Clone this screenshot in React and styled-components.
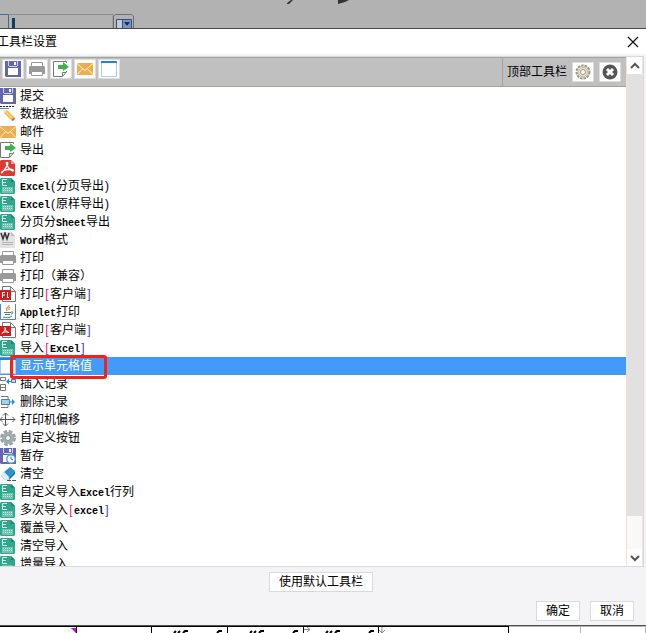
import React from 'react';
import styled, { createGlobalStyle } from 'styled-components';


const GlobalStyle = createGlobalStyle`
  * {
    box-sizing: border-box;
  }

  body {
    margin: 0;
    overflow: hidden;
    color: #000;
    font: 12px/18px "Liberation Sans", "Noto Sans CJK SC", sans-serif;
  }

  button {
    font: inherit;
    color: inherit;
  }
`;

const Page = styled.div`
  height: 100vh;
  display: flex;
  flex-direction: column;
  background: #b2b2b2;
`;

const Backdrop = styled.div`
  flex: 0 0 28px;
  display: flex;
  align-items: flex-end;
  overflow: hidden;
`;

const Dialog = styled.section`
  flex: 1;
  min-height: 0;
  display: flex;
  flex-direction: column;
  border-top: 1px solid #484848;
  border-bottom: 1px solid #505050;
  background: #f4f4f7;
`;

const TitleBar = styled.header`
  flex: 0 0 25px;
  display: flex;
  align-items: center;
  justify-content: space-between;
  padding-right: 7px;
  background: #fff;
  overflow: hidden;

  & h1 {
    margin: 0 0 0 -3px;
    font-size: 12px;
    font-weight: 400;
  }
`;

const CloseButton = styled.button`
  display: flex;
  padding: 0;
  border: 0;
  background: none;
`;

const Body = styled.div`
  flex: 1;
  min-height: 0;
  display: flex;
  margin: 2px 2px 0 0;
  border: solid #d9d9dd;
  border-width: 1px 1px 1px 0;
  background: #fff;
`;

const Main = styled.div`
  flex: 1;
  min-width: 0;
  display: flex;
  flex-direction: column;
`;

const Toolbar = styled.div`
  flex: 0 0 30px;
  display: flex;
  background: #c0c0c0;
  border: solid #a3a396;
  border-width: 1px 0;
`;

const ToolWell = styled.div`
  flex: 1;
  display: flex;
  align-items: flex-start;
  gap: 2px;
  padding: 1px 2px;
  border-right: 1px solid #a3a396;
`;

const ToolActions = styled.div`
  display: flex;
  align-items: center;
  gap: 5px;
  padding: 0 5px 0 4px;
`;

const ToolButton = styled.button`
  width: 22px;
  height: 20px;
  display: flex;
  align-items: center;
  justify-content: center;
  padding: 0;
  border: 1px solid #dcdcdc;
  background: #fff;
`;

const List = styled.ul`
  flex: 1;
  min-height: 0;
  margin: 0;
  padding: 0;
  list-style: none;
  overflow: hidden;
`;

const Row = styled.li`
  position: relative;
  height: 18px;
  display: flex;
  align-items: center;
  gap: 4px;
  color: ${p => p.$selected ? '#fff' : '#000'};
  background: ${p => p.$selected ? '#429bfa' : 'transparent'};
  white-space: nowrap;
`;

const Marker = styled.span`
  position: absolute;
  left: 10px;
  top: -2px;
  z-index: 1;
  width: 97px;
  height: 24px;
  border: 3px solid #fb1e12;
  border-radius: 3px;
`;

const Latin = styled.span`
  font: 10px/1 "Liberation Mono", monospace;
  font-weight: 700;
`;

const Bracket = styled.span`
  display: inline-block;
  width: 6px;
  line-height: 12px;
  text-align: center;
  color: ${p => p.$tint || 'inherit'};
`;

const ScrollBar = styled.div`
  flex: 0 0 17px;
  display: flex;
  flex-direction: column;
  border: solid #ebe4d6;
  border-width: 0 1px;
  background: #f9f9f7;
`;

const ScrollButton = styled.button`
  flex: 0 0 17px;
  display: flex;
  align-items: center;
  justify-content: center;
  padding: 0;
  border: 0;
  background: #fff;
`;

const Track = styled.div`
  flex: 1;
`;

const Thumb = styled.div`
  height: 93%;
  background: #e1e1e1;
`;

const Footer = styled.footer`
  display: flex;
  flex-direction: column;
  gap: 9px;
  padding: 5px 12px 4px 8px;
`;

const FooterRow = styled.div`
  display: flex;
  justify-content: ${p => p.$align};
  gap: 10px;
`;

const FooterButton = styled.button`
  height: 20px;
  padding: 0 9px;
  border: 1px solid #d9d9dc;
  background: #fff;
  line-height: 18px;
`;

const Sheet = styled.div`
  flex: 0 0 7px;
  display: grid;
  grid-template-columns: 77px 75px 76px 76px 75px 130px 72px 1fr;
  background: #fff;
  overflow: hidden;
`;

const Cell = styled.div`
  display: flex;
  justify-content: ${p => p.$end ? 'flex-end' : 'flex-start'};
  border: solid ${p => p.$faint ? '#b4b4b4' : '#000'};
  border-width: 1px 1px 0 0;
  overflow: hidden;
`;

const Drawing = styled.svg`
  flex: none;
  fill: none;
`;


const Svg = ({ size = 16, children }) =>
  <Drawing width={size} height={size} viewBox={`0 0 ${size} ${size}`} aria-hidden='true'>
    {children}
  </Drawing>;

const SaveIcon = () =>
  <Svg>
    <path fill='#6567ae' d='M0 0h16v16H1l-1-1z' />
    <path fill='#fff' d='M3 7h10v7H3z' />
    <path fill='#d0d1ea' d='M3 0h1v5H3zM12 0h1v5h-1zM4 5h8v1H4z' />
    <path fill='#fff' d='M9 1h2v3H9z' />
  </Svg>;

const DraftIcon = () =>
  <Svg>
    <path fill='#6567ae' d='M0 0h16v16H1l-1-1z' />
    <path fill='#fff' d='M3 7h10v7H3z' />
    <path fill='#d0d1ea' d='M3 0h1v5H3zM12 0h1v5h-1zM4 5h8v1H4z' />
    <path fill='#fff' d='M9 1h2v3H9z' />
    <circle cx='11' cy='11' r='5' fill='#4b9ee5' />
    <circle cx='11' cy='11' r='3.6' fill='#fff' />
    <path stroke='#3279bd' d='M11 8.5V11l2 1' />
  </Svg>;

const ValidateIcon = () =>
  <Svg>
    <path stroke='#222' strokeDasharray='2 1' d='M0 .5h14' />
    <path stroke='#4194ec' d='M0 2.5h9' />
    <path fill='#ffe4b0' d='M3 3l1 4 3-3z' />
    <path fill='#f7b83d' d='M4 7l3-3 7 7-3 3z' />
    <path fill='#ffd776' d='M5 6l1-1 7 7-1 1z' />
    <path fill='#e75f49' d='M14 11l1 2-2 2-2-1z' />
  </Svg>;

const MailIcon = () =>
  <Svg>
    <path fill='#edae50' d='M0 2h16v12H0z' />
    <path stroke='#fff0d4' d='M0 2.5l8 7 8-7M0 13.5l6-6M16 13.5l-6-6' />
  </Svg>;

const ExportIcon = () =>
  <Svg>
    <path fill='#fff' stroke='#777' d='M13.5 10V11L9.5 15.5H.5V.5H13.5V2M9.5 15V11.5H13' />
    <path fill='#41b050' d='M5 4h5V1l6 5-6 4V8H5z' />
  </Svg>;

const PdfIcon = () =>
  <Svg>
    <path fill='#da3c35' d='M0 1l1-1h10l4 4v11l-1 1H1l-1-1z' />
    <path fill='#f29b94' d='M11 0v4h4z' />
    <path stroke='#fff' strokeWidth='1.3' d='M7 2.5c2 0 0 5-5 10-1 1-1-1 2-2s7-2 9-.5-3 1-5-3-2-4.500-1-4.500z' />
  </Svg>;

const ExcelIcon = () =>
  <Svg>
    <path fill='#31a58d' d='M0 1l1-1h10l4 4v11l-1 1H1l-1-1z' />
    <path fill='#1f8570' d='M11 0v4h4z' />
    <path stroke='#d8f5ed' d='M7 1.5H2.5v6H7M3 4.5h3' />
    <path fill='#6fc3b2' d='M2 9h11v6H2z' />
    <path stroke='#c5eae1' strokeDasharray='1 1' d='M3 10.5h9M3 12.5h9' />
  </Svg>;

const WordIcon = () =>
  <Svg>
    <path fill='#e3e3e3' d='M0 0h11l4 4v12H0z' />
    <path fill='#bababa' d='M11 0v4h4z' />
    <path stroke='#333' strokeWidth='1.5' d='M1 1l2 6 2-6 2 6 2-6' />
    <path stroke='#b4b4b4' d='M2 10.5h11M2 12.5h11' />
  </Svg>;

const PrintIcon = () =>
  <Svg>
    <path fill='#fff' stroke='#999' d='M2.5 6V1.500h11V6' />
    <path fill='#999' d='M1 5h14l1 1v7H0V6z' />
    <path fill='#fff' stroke='#999' d='M2.5 10.5h11v4h-11z' />
  </Svg>;

const ClientPage = () =>
  <path fill='#fff' stroke='#777' d='M2.5 15.5V.5h8l5 5v10zM10.5.5v5h5' />;

const FlashIcon = () =>
  <Svg>
    <ClientPage />
    <path fill='#c92120' d='M0 4h11v10H0z' />
    <path stroke='#fff' d='M5 6.5H2.5V12M3 9h2M7.500 6v5.500H9' />
  </Svg>;

const PdfClientIcon = () =>
  <Svg>
    <ClientPage />
    <path fill='#c92120' d='M0 4h11v10H0z' />
    <path stroke='#fff' d='M5 5.5c1 2-1 4-3 6 1-2 5-2 7-1-2 0-4-2-4-5z' />
  </Svg>;

const JavaIcon = () =>
  <Svg>
    <path fill='#fff' stroke='#5686ad' d='M.5 0v15.5h15V0' />
    <path stroke='#e98b3b' strokeWidth='1.2' d='M9 1c1 2-4 2-2 6M10 3c-2 1-1 2-1 3' />
    <path stroke='#4779a4' d='M4 8.5h7M5 10.5h5M3 13c3 1 7 1 9-1M11 8c3-1 2 2 0 2' />
  </Svg>;

const WindowIcon = () =>
  <Svg>
    <path fill='#fff' stroke='#a9cae8' d='M.5.5h15v15H.5z' />
    <path fill='#1a88cc' d='M0 0h16v2H0z' />
  </Svg>;

const InsertIcon = () =>
  <Svg>
    <path stroke='#777' d='M.5 1.5h5v3h-5zM.5 8.5h5v6h-5zM0 11.500h6' />
    <path stroke='#2687df' d='M7 5.5h4' />
    <path fill='#2687df' d='M6 5.500l3-3v6z' />
    <path fill='#bee1f4' stroke='#4b7899' d='M11.5 3.500h4v3h-4z' />
  </Svg>;

const DeleteIcon = () =>
  <Svg>
    <path stroke='#777' d='M1 2.5h7V5M1 13.500h7V11' />
    <path fill='#9fd3f1' stroke='#4b83a8' d='M1.5 5.500h8v5h-8z' />
    <path stroke='#2687df' d='M10 8h4' />
    <path fill='#2687df' d='M12 5l3 3-3 3z' />
  </Svg>;

const MoveIcon = () =>
  <Svg>
    <path stroke='#555' d='M0 7.5h15M5.500 1v13M3 3.500L5.500 1 8 3.500M3 11.500L5.500 14 8 11.500M2.500 5L0 7.500 2.500 10M12.500 5L15 7.500 12.500 10' />
  </Svg>;

const GearIcon = () =>
  <Svg>
    <circle cx='8' cy='8' r='6.5' stroke='#98a3a4' strokeWidth='3' strokeDasharray='3.500 1.600' />
    <circle cx='8' cy='8' r='6' fill='#a3acad' />
    <circle cx='8' cy='8' r='2.5' fill='#f4f6f6' stroke='#8b9596' />
  </Svg>;

const EraserIcon = () =>
  <Svg>
    <path fill='#2695c8' d='M10 1l5 4-6 6-5-5z' />
    <path fill='#1774a8' d='M15 5v3l-6 6v-3z' />
    <path fill='#d9f0fb' stroke='#8ec5df' strokeWidth='.5' d='M4 6l5 5v3H5L1 10z' />
    <path stroke='#555' strokeDasharray='4 1' d='M7 14.5h9' />
  </Svg>;

const SettingsIcon = () =>
  <Svg>
    <circle cx='8' cy='8' r='6.5' fill='#e6e1d2' stroke='#9c9684' strokeWidth='2' strokeDasharray='2.500 1' />
    <circle cx='8' cy='8' r='4.5' stroke='#c6bfac' />
    <circle cx='8' cy='8' r='2.5' fill='#fff' stroke='#9c9684' />
  </Svg>;

const RemoveIcon = () =>
  <Svg>
    <circle cx='8' cy='8' r='7.5' fill='#555' />
    <path stroke='#fff' strokeWidth='3' d='M5 5l6 6M11 5l-6 6' />
  </Svg>;

const Chevron = ({ down }) =>
  <Svg size={10}>
    <path stroke='#555' strokeWidth='2' d={down ? 'M1 3l4 4 4-4' : 'M1 7l4-4 4 4'} />
  </Svg>;


const items = [
  ['提交', SaveIcon],
  ['数据校验', ValidateIcon],
  ['邮件', MailIcon],
  ['导出', ExportIcon],
  ['PDF', PdfIcon],
  ['Excel(分页导出)', ExcelIcon],
  ['Excel(原样导出)', ExcelIcon],
  ['分页分Sheet导出', ExcelIcon],
  ['Word格式', WordIcon],
  ['打印', PrintIcon],
  ['打印（兼容）', PrintIcon],
  ['打印[客户端]', FlashIcon],
  ['Applet打印', JavaIcon],
  ['打印[客户端]', PdfClientIcon],
  ['导入[Excel]', ExcelIcon],
  ['显示单元格值', WindowIcon, true],
  ['插入记录', InsertIcon],
  ['删除记录', DeleteIcon],
  ['打印机偏移', MoveIcon],
  ['自定义按钮', GearIcon],
  ['暂存', DraftIcon],
  ['清空', EraserIcon],
  ['自定义导入Excel行列', ExcelIcon],
  ['多次导入[excel]', ExcelIcon],
  ['覆盖导入', ExcelIcon],
  ['清空导入', ExcelIcon],
  ['增量导入', ExcelIcon],
];

const tools = [
  ['提交', SaveIcon],
  ['打印', PrintIcon],
  ['导出', ExportIcon],
  ['邮件', MailIcon],
  ['显示单元格值', WindowIcon],
];

const tints = { '[': '#f0148c', ']': '#4a3fd0' };

// latin letters and brackets take half the width of a chinese character
const Label = ({ text }) =>
  <span>
    {text.split(/([A-Za-z]+|[[\]()])/).filter(Boolean).map((part, i) => {
      if (/^[A-Za-z]/.test(part)) return <Latin key={i}>{part}</Latin>;
      if (/^[[\]()]/.test(part)) return <Bracket key={i} $tint={tints[part]}>{part}</Bracket>;
      return part;
    })}
  </span>;

const BackdropArt = () =>
  <Drawing width='360' height='28' aria-hidden='true'>
    <path stroke='#466a94' d='M0 14.5h8.500V28' />
    <path stroke='#8c8c8c' d='M9 14.5h104V28' />
    <path stroke='#123b5c' strokeWidth='3' d='M13.5 18v10' />
    <path stroke='#707070' d='M113.5 28V16l2-1.500h16l2 1.500v12' />
    <path fill='#c3cbd6' stroke='#31517e' d='M116.5 28v-8.500h15V28M122.500 20v8' />
    <path fill='#7e96bd' d='M123 20h8v8h-8z' />
    <path fill='#142e63' d='M124 22h6l-3 4z' />
    <path fill='#333' d='M287 3l4-3h2l-4 4h-2zM338 4V0h11l-4 2z' />
  </Drawing>;

const CellMarks = ({ arrow }) =>
  <Drawing width='75' height='6' aria-hidden='true'>
    <path stroke='#000' strokeWidth='2' d='M22 6l2-2M26 6l2-2M31 6l2-2h3M65 6l2-2h3' />
    {arrow && <path stroke='#888' d='M0 2.5h5M3 0l3 2.500L3 5' />}
  </Drawing>;

const App = () =>
  <Page>
    <GlobalStyle />
    <Backdrop>
      <BackdropArt />
    </Backdrop>
    <Dialog>
      <TitleBar>
        <h1>工具栏设置</h1>
        <CloseButton aria-label='关闭'>
          <Svg size={12}>
            <path stroke='#111' strokeWidth='1.2' d='M1 1l10 10M11 1L1 11' />
          </Svg>
        </CloseButton>
      </TitleBar>
      <Body>
        <Main>
          <Toolbar>
            <ToolWell>
              {tools.map(([name, Icon]) =>
                <ToolButton key={name} aria-label={name}><Icon /></ToolButton>
              )}
            </ToolWell>
            <ToolActions>
              <span>顶部工具栏</span>
              <ToolButton aria-label='设置'><SettingsIcon /></ToolButton>
              <ToolButton aria-label='删除'><RemoveIcon /></ToolButton>
            </ToolActions>
          </Toolbar>
          <List>
            {items.map(([text, Icon, selected], i) =>
              <Row key={i} $selected={selected}>
                <Icon />
                <Label text={text} />
                {selected && <Marker />}
              </Row>
            )}
          </List>
        </Main>
        <ScrollBar>
          <ScrollButton aria-label='向上'><Chevron /></ScrollButton>
          <Track><Thumb /></Track>
          <ScrollButton aria-label='向下'><Chevron down /></ScrollButton>
        </ScrollBar>
      </Body>
      <Footer>
        <FooterRow $align='center'>
          <FooterButton>使用默认工具栏</FooterButton>
        </FooterRow>
        <FooterRow $align='flex-end'>
          <FooterButton>确定</FooterButton>
          <FooterButton>取消</FooterButton>
        </FooterRow>
      </Footer>
    </Dialog>
    <Sheet>
      <Cell $end>
        <Drawing width='5' height='6' aria-hidden='true'><path fill='#c800e6' d='M0 1h5v5z' /></Drawing>
      </Cell>
      <Cell />
      <Cell><CellMarks /></Cell>
      <Cell><CellMarks /></Cell>
      <Cell><CellMarks arrow /></Cell>
      <Cell>
        <Drawing width='6' height='6' aria-hidden='true'><path stroke='#888' d='M3 0v6M0 3l3 3 3-3' /></Drawing>
      </Cell>
      <Cell $faint />
      <Cell $faint />
    </Sheet>
  </Page>;

export default App;
